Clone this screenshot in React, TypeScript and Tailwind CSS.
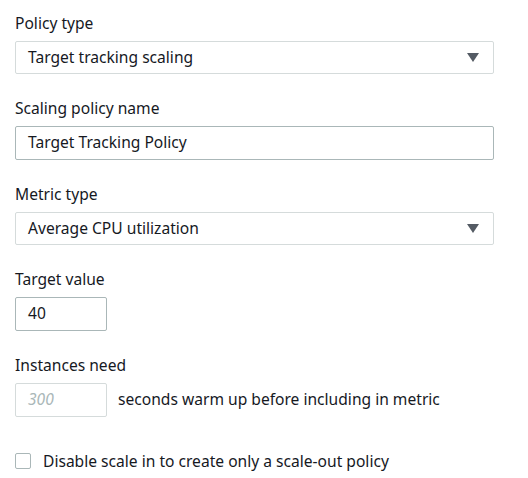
import React from "react";

function Caret() {
  return (
    <svg width="12" height="9" viewBox="0 0 12 9" className="shrink-0">
      <path d="M0 0 H12 L6 9 Z" fill="#545b64" />
    </svg>
  );
}

function Label({ children }: { children: React.ReactNode }) {
  return <div className="h-[22px] leading-[22px] text-[15.6px] text-[#16191f] mb-[7px]">{children}</div>;
}

export default function App() {
  return (
    <div
      className="w-[528px] h-[478px] bg-white pl-[15px] pr-[34px] pt-3 text-[#16191f]"
      style={{ fontFamily: '"Noto Sans", "Open Sans", sans-serif' }}
    >
      <div className="flex flex-col gap-[23px]">
        <div>
          <Label>Policy type</Label>
          <div className="h-[33px] border border-[#d5dbdb] rounded-[2px] flex items-center justify-between pl-[12px] pr-[14px] text-[15.6px]">
            <span>Target tracking scaling</span>
            <Caret />
          </div>
        </div>
        <div>
          <Label>Scaling policy name</Label>
          <div className="h-[34px] border border-[#aab7b8] rounded-[2px] flex items-center pl-[12px] text-[15.6px]">
            <span>Target Tracking Policy</span>
          </div>
        </div>
        <div>
          <Label>Metric type</Label>
          <div className="h-[33px] border border-[#d5dbdb] rounded-[2px] flex items-center justify-between pl-[12px] pr-[14px] text-[15.6px]">
            <span>Average CPU utilization</span>
            <Caret />
          </div>
        </div>
        <div>
          <Label>Target value</Label>
          <div className="w-[92px] h-[34px] border border-[#aab7b8] rounded-[2px] flex items-center pl-[12px] text-[15.6px]">
            <span>40</span>
          </div>
        </div>
        <div>
          <Label>Instances need</Label>
          <div className="flex items-center gap-[11px]">
            <div className="w-[92px] h-[34px] border border-[#d5dbdb] rounded-[2px] flex items-center pl-[12px] text-[15.6px]">
              <span className="italic text-[#aab7b8]">300</span>
            </div>
            <span className="text-[15.6px]">seconds warm up before including in metric</span>
          </div>
        </div>
      </div>
      <div className="mt-[33px] flex items-center gap-[12px]">
        <div className="w-[16px] h-[16px] border border-[#aab7b8] rounded-[2px] bg-white" />
        <span className="text-[15.6px] leading-[22px]">Disable scale in to create only a scale-out policy</span>
      </div>
    </div>
  );
}
